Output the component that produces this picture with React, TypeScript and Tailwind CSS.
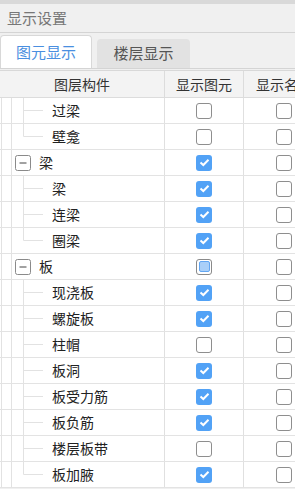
// @ts-nocheck
type Row = { label: string; parent?: boolean; last?: boolean; show: 'on' | 'off' | 'mixed' };

const rows: Row[] = [
  { label: '过梁', show: 'off' },
  { label: '壁龛', show: 'off', last: true },
  { label: '梁', parent: true, show: 'on' },
  { label: '梁', show: 'on' },
  { label: '连梁', show: 'on' },
  { label: '圈梁', show: 'on', last: true },
  { label: '板', parent: true, show: 'mixed' },
  { label: '现浇板', show: 'on' },
  { label: '螺旋板', show: 'on' },
  { label: '柱帽', show: 'off' },
  { label: '板洞', show: 'on' },
  { label: '板受力筋', show: 'on' },
  { label: '板负筋', show: 'on' },
  { label: '楼层板带', show: 'off' },
  { label: '板加腋', show: 'on', last: true },
];

function Check({ state }: { state: 'on' | 'off' | 'mixed' }) {
  if (state === 'on') {
    return (
      <div className="w-[16px] h-[16px] rounded-[3px] bg-[#52a2f6] flex items-center justify-center">
        <svg width="11" height="9" viewBox="0 0 11 9">
          <path d="M1.5 4.5 L4.3 7 L9.5 1.8" fill="none" stroke="#fff" strokeWidth="2" />
        </svg>
      </div>
    );
  }
  if (state === 'mixed') {
    return (
      <div className="w-[16px] h-[16px] rounded-[3px] border border-[#8a8a8a] bg-white flex items-center justify-center">
        <div className="w-[11px] h-[11px] rounded-[2px] bg-[#a9cff8] border border-[#62a6f2]" />
      </div>
    );
  }
  return <div className="w-[16px] h-[16px] rounded-[3px] border border-[#8e8e8e] bg-white" />;
}

function TreeLines({ row }: { row: Row }) {
  const c = '#e2e2e2';
  if (row.parent) {
    return (
      <svg width="39" height="25" className="shrink-0">
        <line x1="1.5" y1="0" x2="1.5" y2="25" stroke={c} />
        <line x1="11.5" y1="0" x2="11.5" y2="25" stroke={c} />
        <rect x="15.5" y="5.5" width="15" height="15" rx="2" fill="#fff" stroke="#8a8a8a" />
        <line x1="19.5" y1="13" x2="26.5" y2="13" stroke="#444" />
      </svg>
    );
  }
  return (
    <svg width="52" height="25" className="shrink-0">
      <line x1="1.5" y1="0" x2="1.5" y2="25" stroke={c} />
      <line x1="11.5" y1="0" x2="11.5" y2="25" stroke={c} />
      <line x1="23.5" y1="0" x2="23.5" y2={row.last ? 12.5 : 25} stroke={c} />
      <line x1="23.5" y1="12.5" x2="43" y2="12.5" stroke={c} />
    </svg>
  );
}

export default function App() {
  return (
    <div
      className="w-[295px] h-[489px] overflow-hidden bg-[#f0f0f0]"
      style={{ fontFamily: '"Noto Sans CJK SC", "Noto Sans", sans-serif' }}
    >
      <div className="h-[4px] bg-[#d9d9d9]" />
      <div className="h-[29px] box-border border-b border-[#d4d4d4] px-[7px] flex items-center text-[15px] text-[#777]">
        显示设置
      </div>
      <div className="h-[36px] box-border border-b border-[#d4d4d4] flex items-end gap-[5px]">
        <div className="w-[92px] h-[33px] bg-white rounded-t-[4px] border border-b-0 border-[#d8d8d8] flex items-center justify-center text-[15px] text-[#4a8fe0]">
          图元显示
        </div>
        <div className="w-[93px] h-[29px] bg-[#e2e2e2] rounded-t-[4px] flex items-center justify-center text-[15px] text-[#555]">
          楼层显示
        </div>
      </div>
      <div className="mt-[1px] border-t border-[#d8d8d8] bg-white w-[330px]">
        <div className="h-[27px] box-border border-b border-[#dcdcdc] bg-[#f3f3f3] flex text-[14px] text-[#333]">
          <div className="w-[165px] shrink-0 border-r border-[#dcdcdc] flex items-center justify-center">图层构件</div>
          <div className="w-[79px] shrink-0 border-r border-[#dcdcdc] flex items-center justify-center">显示图元</div>
          <div className="w-[80px] shrink-0 flex items-center justify-center">显示名称</div>
        </div>
        {rows.map((r, i) => (
          <div key={i} className="h-[26px] box-border border-b border-[#e3e3e3] flex text-[14px] text-[#222]">
            <div className="w-[165px] shrink-0 border-r border-[#e0e0e0] flex items-center">
              <TreeLines row={r} />
              <span>{r.label}</span>
            </div>
            <div className="w-[79px] shrink-0 border-r border-[#e0e0e0] flex items-center justify-center">
              <Check state={r.show} />
            </div>
            <div className="w-[80px] shrink-0 flex items-center justify-center">
              <Check state="off" />
            </div>
          </div>
        ))}
      </div>
    </div>
  );
}
